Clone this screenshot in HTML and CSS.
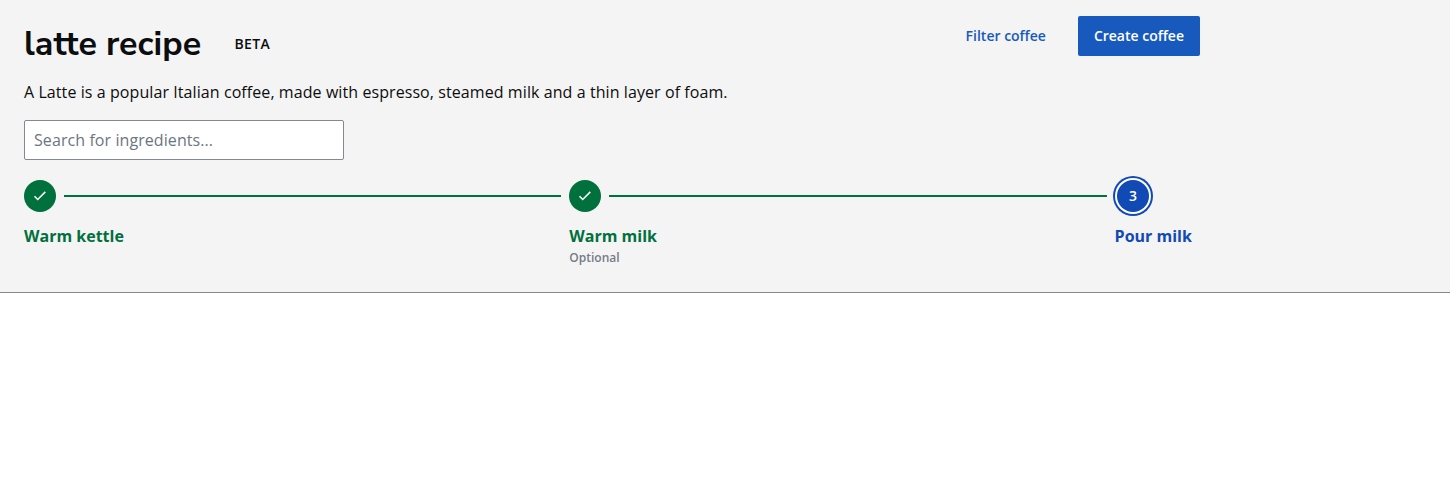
FILE: index.html
```html
<!DOCTYPE html>
<html lang="en">
<head>
<meta charset="utf-8">
<title>latte recipe</title>
<link rel="stylesheet" href="styles.css">
</head>
<body>
<header class="page-header">
  <div class="content">
    <div class="top">
      <div class="heading">
        <h1 class="title">latte recipe</h1>
        <span class="tag">BETA</span>
      </div>
      <div class="actions">
        <button class="button link">Filter coffee</button>
        <button class="button primary">Create coffee</button>
      </div>
    </div>
    <p class="description">A Latte is a popular Italian coffee, made with espresso, steamed milk and a thin layer of foam.</p>
    <input class="search" type="text" placeholder="Search for ingredients...">
    <ol class="stepper">
      <li class="step done">
        <div class="track"><span class="dot"><svg class="check" viewBox="0 0 16 16"><path d="M2.5 8.3 5.7 11.5 13.3 3.9"/></svg></span><span class="line"></span></div>
        <span class="label">Warm kettle</span>
      </li>
      <li class="step done">
        <div class="track"><span class="dot"><svg class="check" viewBox="0 0 16 16"><path d="M2.5 8.3 5.7 11.5 13.3 3.9"/></svg></span><span class="line"></span></div>
        <span class="label">Warm milk</span>
        <span class="note">Optional</span>
      </li>
      <li class="step current">
        <div class="track"><span class="dot">3</span></div>
        <span class="label">Pour milk</span>
      </li>
    </ol>
  </div>
</header>
</body>
</html>
```
FILE: styles.css
```css
* { box-sizing: border-box; }
body { margin: 0; background: #fff; color: #0c0d0e; font: 16px/24px "Open Sans", sans-serif; }
.page-header { height: 293px; background: #f4f4f4; border-bottom: 1px solid #838796; }
.content { width: 1200px; padding-left: 24px; }
.top { display: flex; justify-content: space-between; align-items: flex-start; height: 80px; padding-top: 16px; }
.heading { display: flex; align-items: center; height: 56px; }
.title { margin: 0; width: 177px; font: 700 34px/48px "Nunito Sans", Nunito, Lato, sans-serif; white-space: nowrap; }
.tag { margin-left: 33.5px; font-size: 14px; font-weight: 600; letter-spacing: 0.35px; }
.actions { display: flex; gap: 16px; }
.button { height: 40px; padding: 0 16px; border: 0; border-radius: 2px; font: 600 14px/24px "Open Sans", sans-serif; }
.link { background: none; color: #1859bd; }
.primary { background: #1859bd; color: #fff; }
.description { margin: 0 0 16px; letter-spacing: 0.08px; }
.search { display: block; width: 320px; height: 40px; padding: 0 9px; border: 1px solid #838796; border-radius: 2px; background: #fff; font: 16px/24px "Open Sans", sans-serif; letter-spacing: 0.08px; }
.search::placeholder { color: #6c7582; opacity: 1; }
.stepper { display: flex; margin: 20px 0 0; padding: 0; list-style: none; }
.step { display: flex; flex-direction: column; width: 545.3px; font-weight: 700; }
.step.current { width: 85px; }
.track { display: flex; align-items: center; gap: 8px; height: 32px; padding-right: 8px; margin-bottom: 12px; }
.dot { display: flex; align-items: center; justify-content: center; flex: none; width: 32px; height: 32px; border-radius: 50%; color: #fff; font-size: 14px; font-weight: 600; }
.done { color: #00703c; }
.done .dot { background: #00703c; }
.check { width: 16px; height: 16px; fill: none; stroke: #fff; stroke-width: 1.5; }
.line { flex: 1; height: 2px; background: #00703c; }
.current { color: #1149b5; }
.current .dot { margin-left: 2.4px; background: #1149b5; box-shadow: 0 0 0 2px #fff, 0 0 0 4px #1149b5; }
.note { padding-top: 1px; font-size: 12px; line-height: 18px; font-weight: 600; color: #747c87; }
```
